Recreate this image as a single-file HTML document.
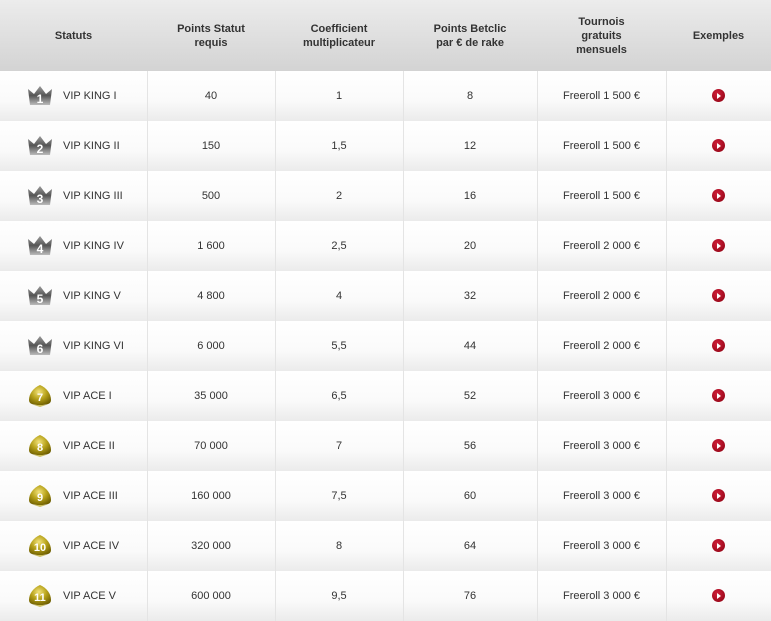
<!DOCTYPE html>
<html><head><meta charset="utf-8"><style>
*{margin:0;padding:0;box-sizing:border-box}
body{width:771px;height:618px;overflow:hidden;background:#fff;font-family:"Liberation Sans",Arial,sans-serif;font-size:11px;color:#333}
table{border-collapse:collapse;width:771px;table-layout:fixed}
th{height:71px;background:linear-gradient(#ececec,#d3d3d3);font-weight:bold;font-size:11px;color:#333;line-height:14px;text-align:center}
td{height:50px;text-align:center;background:linear-gradient(#fff 0%,#fafafa 60%,#ebebeb 100%);border-left:1px solid #e4e4e4}
td:first-child{border-left:none;text-align:left}
.st{display:flex;align-items:center;padding-left:27px}
.st svg{margin-right:10px;flex:none}
.pl{display:inline-block;width:13px;height:13px;border-radius:50%;background:radial-gradient(circle at 40% 35%,#d0203a,#8a0010);position:relative;top:1px}
.pl:after{content:"";position:absolute;left:5px;top:3.5px;border-left:4px solid #fff;border-top:3px solid transparent;border-bottom:3px solid transparent}
</style></head><body>
<svg width="0" height="0" style="position:absolute"><defs>
<linearGradient id="cg" x1="0" y1="0" x2="0" y2="1"><stop offset="0" stop-color="#9a9a9a"/><stop offset=".5" stop-color="#555"/><stop offset="1" stop-color="#bbb"/></linearGradient>
<radialGradient id="ag" cx=".45" cy=".35" r=".7"><stop offset="0" stop-color="#f2e27a"/><stop offset=".5" stop-color="#b7a21a"/><stop offset="1" stop-color="#6e5e00"/></radialGradient>
<symbol id="crown" viewBox="0 0 26 22"><path d="M1 4 L7 9 L13 1 L19 9 L25 4 L23 20 L3 20 Z" fill="url(#cg)"/></symbol>
<symbol id="ace" viewBox="0 0 26 24"><path d="M13 1 C6 4 2 10 2 16 C2 20 6 21 13 21 C20 21 24 20 24 16 C24 10 20 4 13 1Z" fill="url(#ag)"/><path d="M7 21 L19 21 L13 23Z" fill="#c9bd60"/></symbol>
</defs></svg>
<table>
<colgroup><col style="width:147px"><col style="width:128px"><col style="width:128px"><col style="width:134px"><col style="width:129px"><col style="width:105px"></colgroup>
<tr><th>Statuts</th><th>Points Statut<br>requis</th><th>Coefficient<br>multiplicateur</th><th>Points Betclic<br>par € de rake</th><th>Tournois<br>gratuits<br>mensuels</th><th>Exemples</th></tr>
<tr><td><div class="st"><svg width="26" height="22"><use href="#crown"/><text x="13" y="18" text-anchor="middle" font-size="12" font-weight="bold" fill="#fff" font-family="Liberation Sans">1</text></svg>VIP KING I</div></td><td>40</td><td>1</td><td>8</td><td>Freeroll 1 500 €</td><td><span class="pl"></span></td></tr>
<tr><td><div class="st"><svg width="26" height="22"><use href="#crown"/><text x="13" y="18" text-anchor="middle" font-size="12" font-weight="bold" fill="#fff" font-family="Liberation Sans">2</text></svg>VIP KING II</div></td><td>150</td><td>1,5</td><td>12</td><td>Freeroll 1 500 €</td><td><span class="pl"></span></td></tr>
<tr><td><div class="st"><svg width="26" height="22"><use href="#crown"/><text x="13" y="18" text-anchor="middle" font-size="12" font-weight="bold" fill="#fff" font-family="Liberation Sans">3</text></svg>VIP KING III</div></td><td>500</td><td>2</td><td>16</td><td>Freeroll 1 500 €</td><td><span class="pl"></span></td></tr>
<tr><td><div class="st"><svg width="26" height="22"><use href="#crown"/><text x="13" y="18" text-anchor="middle" font-size="12" font-weight="bold" fill="#fff" font-family="Liberation Sans">4</text></svg>VIP KING IV</div></td><td>1 600</td><td>2,5</td><td>20</td><td>Freeroll 2 000 €</td><td><span class="pl"></span></td></tr>
<tr><td><div class="st"><svg width="26" height="22"><use href="#crown"/><text x="13" y="18" text-anchor="middle" font-size="12" font-weight="bold" fill="#fff" font-family="Liberation Sans">5</text></svg>VIP KING V</div></td><td>4 800</td><td>4</td><td>32</td><td>Freeroll 2 000 €</td><td><span class="pl"></span></td></tr>
<tr><td><div class="st"><svg width="26" height="22"><use href="#crown"/><text x="13" y="18" text-anchor="middle" font-size="12" font-weight="bold" fill="#fff" font-family="Liberation Sans">6</text></svg>VIP KING VI</div></td><td>6 000</td><td>5,5</td><td>44</td><td>Freeroll 2 000 €</td><td><span class="pl"></span></td></tr>
<tr><td><div class="st"><svg width="26" height="24"><use href="#ace"/><text x="13" y="17" text-anchor="middle" font-size="11" font-weight="bold" fill="#fff" font-family="Liberation Sans">7</text></svg>VIP ACE I</div></td><td>35 000</td><td>6,5</td><td>52</td><td>Freeroll 3 000 €</td><td><span class="pl"></span></td></tr>
<tr><td><div class="st"><svg width="26" height="24"><use href="#ace"/><text x="13" y="17" text-anchor="middle" font-size="11" font-weight="bold" fill="#fff" font-family="Liberation Sans">8</text></svg>VIP ACE II</div></td><td>70 000</td><td>7</td><td>56</td><td>Freeroll 3 000 €</td><td><span class="pl"></span></td></tr>
<tr><td><div class="st"><svg width="26" height="24"><use href="#ace"/><text x="13" y="17" text-anchor="middle" font-size="11" font-weight="bold" fill="#fff" font-family="Liberation Sans">9</text></svg>VIP ACE III</div></td><td>160 000</td><td>7,5</td><td>60</td><td>Freeroll 3 000 €</td><td><span class="pl"></span></td></tr>
<tr><td><div class="st"><svg width="26" height="24"><use href="#ace"/><text x="13" y="17" text-anchor="middle" font-size="11" font-weight="bold" fill="#fff" font-family="Liberation Sans">10</text></svg>VIP ACE IV</div></td><td>320 000</td><td>8</td><td>64</td><td>Freeroll 3 000 €</td><td><span class="pl"></span></td></tr>
<tr><td><div class="st"><svg width="26" height="24"><use href="#ace"/><text x="13" y="17" text-anchor="middle" font-size="11" font-weight="bold" fill="#fff" font-family="Liberation Sans">11</text></svg>VIP ACE V</div></td><td>600 000</td><td>9,5</td><td>76</td><td>Freeroll 3 000 €</td><td><span class="pl"></span></td></tr>
</table>
</body></html>
